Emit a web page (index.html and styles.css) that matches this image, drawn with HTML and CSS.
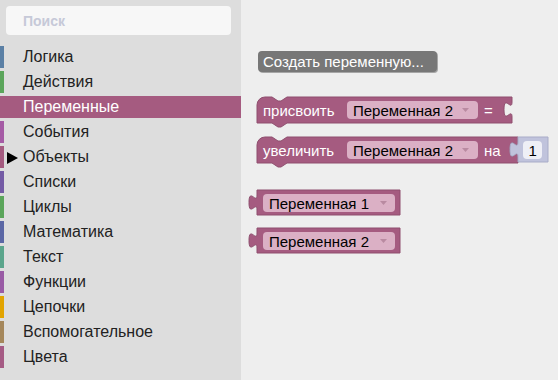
FILE: index.html
```html
<!DOCTYPE html>
<html lang="ru">
<head>
  <meta charset="UTF-8" />
  <title>Blockly</title>
  <link rel="stylesheet" href="styles.css">
</head>
<body>

  <div class="toolbox">
    <input class="search" type="text" placeholder="Поиск">
    <div class="categories">
      <div class="cat" style="border-color: #5b80a5"><span class="toggle"></span>Логика</div>
      <div class="cat" style="border-color: #5ba55b"><span class="toggle"></span>Действия</div>
      <div class="cat selected" style="border-color: #a55b80"><span class="toggle"></span>Переменные</div>
      <div class="cat" style="border-color: #a55ba5"><span class="toggle"></span>События</div>
      <div class="cat" style="border-color: #a55b80"><span class="toggle"><i class="arrow"></i></span>Объекты</div>
      <div class="cat" style="border-color: #745ba5"><span class="toggle"></span>Списки</div>
      <div class="cat" style="border-color: #5ba55b"><span class="toggle"></span>Циклы</div>
      <div class="cat" style="border-color: #5b67a5"><span class="toggle"></span>Математика</div>
      <div class="cat" style="border-color: #5ba58c"><span class="toggle"></span>Текст</div>
      <div class="cat" style="border-color: #995ba5"><span class="toggle"></span>Функции</div>
      <div class="cat" style="border-color: #e2a400"><span class="toggle"></span>Цепочки</div>
      <div class="cat" style="border-color: #a5875b"><span class="toggle"></span>Вспомогательное</div>
      <div class="cat" style="border-color: #a55b84"><span class="toggle"></span>Цвета</div>
    </div>
  </div>

  <div class="workspace">
    <svg class="flyout" width="317" height="380" viewBox="241 0 317 380">
      <!-- create variable button -->
      <rect x="259" y="52" width="179" height="21" rx="4" fill="#000" opacity="0.3"/>
      <rect class="btn" x="258" y="51" width="179" height="21" rx="4"/>
      <text class="label" x="263" y="67">Создать переменную...</text>

      <!-- set block -->
      <path class="block" d="M 257,105 A 8 8 0 0 1 265,97 H 272 l 6,4 3,0 6,-4 H 512 v 5 c 0,10 -8,-8 -8,7.5 s 8,-2.5 8,7.5 V 123 H 287 l -6,4 -3,0 -6,-4 H 257 Z"/>
      <text class="label" x="263" y="115.5">присвоить</text>
      <rect class="field" x="347" y="101" width="131" height="18" rx="4"/>
      <text class="value" x="353" y="115.5">Переменная 2</text>
      <path class="drop" d="M 462,108 h 7 l -3.5,4 Z"/>
      <text class="label" x="484" y="115.5">=</text>

      <!-- change block -->
      <path class="block" d="M 257,145 A 8 8 0 0 1 265,137 H 272 l 6,4 3,0 6,-4 H 518 v 5 c 0,10 -8,-8 -8,7.5 s 8,-2.5 8,7.5 V 163 H 287 l -6,4 -3,0 -6,-4 H 257 Z"/>
      <text class="label" x="263" y="155.5">увеличить</text>
      <rect class="field" x="347" y="141" width="131" height="18" rx="4"/>
      <text class="value" x="353" y="155.5">Переменная 2</text>
      <path class="drop" d="M 462,148 h 7 l -3.5,4 Z"/>
      <text class="label" x="484" y="155.5">на</text>
      <path class="shadow-block" d="M 518,137 H 548 V 162 H 518 V 157 c 0,-10 -8,8 -8,-7.5 s 8,2.5 8,-7.5 Z"/>
      <rect class="num" x="523" y="141" width="19" height="18" rx="4"/>
      <text class="value" x="528.5" y="155.5">1</text>

      <!-- getters -->
      <path class="block" d="M 257,190 H 400 V 215 H 257 V 210 c 0,-10 -8,8 -8,-7.5 s 8,2.5 8,-7.5 Z"/>
      <rect class="field" x="263" y="194" width="132" height="18" rx="4"/>
      <text class="value" x="269" y="208.5">Переменная 1</text>
      <path class="drop" d="M 380,201 h 7 l -3.5,4 Z"/>

      <path class="block" d="M 257,228 H 400 V 253 H 257 V 248 c 0,-10 -8,8 -8,-7.5 s 8,2.5 8,-7.5 Z"/>
      <rect class="field" x="263" y="232" width="132" height="18" rx="4"/>
      <text class="value" x="269" y="246.5">Переменная 2</text>
      <path class="drop" d="M 380,239 h 7 l -3.5,4 Z"/>
    </svg>
  </div>

</body>
</html>
```

FILE: styles.css
```css
body {
  margin: 0;
  height: 380px;
  display: flex;
  overflow: hidden;
  font-family: "Liberation Sans", Arial, sans-serif;
  background: #eeeeee;
}

.toolbox {
  width: 241px;
  flex-shrink: 0;
  background: #dddddd;
  display: flex;
  flex-direction: column;
}

.search {
  margin: 6px 10px 0 6px;
  height: 29px;
  box-sizing: border-box;
  border: none;
  border-radius: 4px;
  background: #f7f7f7;
  padding: 0 0 0 17px;
  font-family: inherit;
  font-size: 14px;
  font-weight: bold;
  outline: none;
}

.search::placeholder {
  color: #c6c9d8;
}

.categories {
  margin-top: 11px;
  display: flex;
  flex-direction: column;
  gap: 3px;
}

.cat {
  height: 22px;
  border-left: 4px solid;
  display: flex;
  align-items: center;
  font-size: 16px;
  color: #222;
}

.cat.selected {
  background: #a55b80;
  color: #fff;
}

.toggle {
  width: 19px;
  height: 22px;
  display: flex;
  align-items: center;
}

.arrow {
  margin-left: 3px;
  margin-top: 1px;
  width: 0;
  height: 0;
  border-left: 11px solid #000;
  border-top: 6px solid transparent;
  border-bottom: 6px solid transparent;
}

.workspace {
  flex: 1;
  background: #eeeeee;
}

.flyout {
  display: block;
}

.btn {
  fill: #777777;
}

.block {
  fill: #a55b80;
  stroke: #8f4f6f;
  stroke-width: 1;
}

.shadow-block {
  fill: #c0c3dc;
  stroke: #a9acc8;
  stroke-width: 1;
}

.field {
  fill: #dbb0c5;
}

.num {
  fill: #eeeff6;
}

.drop {
  fill: #b98aa1;
}

.label {
  fill: #fff;
  font-size: 15px;
}

.value {
  fill: #000;
  font-size: 15px;
}
```
